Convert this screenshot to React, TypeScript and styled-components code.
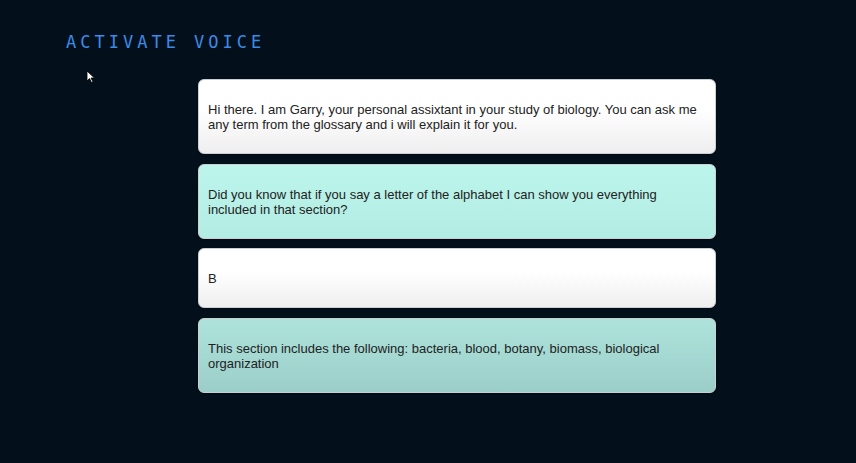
import React from "react";
import styled, { createGlobalStyle } from "styled-components";

const Global = createGlobalStyle`
  html, body { margin: 0; padding: 0; background: #03101c; }
  body { width: 856px; height: 463px; overflow: hidden; }
`;

const Page = styled.div`
  position: relative;
  width: 856px;
  height: 463px;
  background: #03101c;
  padding: 32px 0 0 66px;
  box-sizing: border-box;
`;

const Title = styled.h1`
  margin: 0;
  font-family: "DejaVu Sans Mono", "Liberation Mono", monospace;
  font-weight: normal;
  font-size: 17px;
  letter-spacing: 4px;
  color: #3b8be6;
  line-height: 20px;
`;

const Cursor = styled.svg`
  position: absolute;
  left: 86px;
  top: 70px;
`;

const List = styled.div`
  display: flex;
  flex-direction: column;
  gap: 9.5px;
  width: 518px;
  margin: 27px 0 0 132px;
`;

type Tone = "white" | "aqua" | "teal";

const backgrounds: Record<Tone, string> = {
  white: "linear-gradient(#ffffff 40%, #eeeeee)",
  aqua: "linear-gradient(#bcf5ec, #b3ece3)",
  teal: "linear-gradient(#aee3dc, #9bcec8)",
};

const Card = styled.div<{ $tone: Tone }>`
  box-sizing: border-box;
  border: 1px solid #c9cfd2;
  border-radius: 6px;
  background: ${(p) => backgrounds[p.$tone]};
  padding: 22px 9px 21px;
  font-family: "Liberation Sans", Arial, sans-serif;
  font-size: 13px;
  line-height: 15px;
  color: #222;
  box-shadow: 0 1px 2px rgba(0,0,0,0.4);
`;

export default function App() {
  return (
    <Page>
      <Global />
      <Title>ACTIVATE VOICE</Title>
      <Cursor width="10" height="14" viewBox="0 0 10 14">
        <path d="M1 1 L1 11 L3.5 8.5 L5.5 12.5 L7 11.8 L5 8 L8.5 8 Z" fill="#fff" stroke="#000" strokeWidth="0.8" />
      </Cursor>
      <List>
        <Card $tone="white">
          Hi there. I am Garry, your personal assixtant in your study of biology. You can ask me any term from the glossary and i will explain it for you.
        </Card>
        <Card $tone="aqua">
          Did you know that if you say a letter of the alphabet I can show you everything included in that section?
        </Card>
        <Card $tone="white">B</Card>
        <Card $tone="teal">
          This section includes the following: bacteria, blood, botany, biomass, biological organization
        </Card>
      </List>
    </Page>
  );
}
